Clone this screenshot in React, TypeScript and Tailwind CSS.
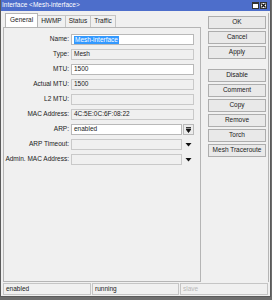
import React from "react";

const Field = ({ value, ro, selected, w = "w-[123px]" }: { value?: string; ro?: boolean; selected?: boolean; w?: string }) => (
  <div
    className={`${w} h-[11px] flex items-center px-[2px] border ${ro ? "bg-[#f0f0f0] border-[#c9c9c9]" : "bg-white border-[#b9b9b9]"}`}
  >
    {value && (
      <span className={selected ? "bg-[#3399ff] text-white leading-[8px] px-[1px]" : "text-[#1a1a1a]"}>{value}</span>
    )}
  </div>
);

const Row = ({ label, children }: { label: string; children: React.ReactNode }) => (
  <div className="flex items-center h-[11px]">
    <div className="w-[67px] text-right pr-[2px] text-[#1a1a1a]">{label}</div>
    {children}
  </div>
);

const Arrow = () => (
  <svg width="7" height="5" viewBox="0 0 7 5" className="ml-[3px]">
    <path d="M0.5 1 L6.5 1 L3.5 4.5 Z" fill="#111" />
  </svg>
);

const Btn = ({ label }: { label: string }) => (
  <div className="h-[13px] flex items-center justify-center border border-[#adadad] bg-[#e9e9e9] text-[#1a1a1a]">{label}</div>
);

export default function App() {
  return (
    <div className="w-[272px] h-[300px] bg-[#6e6e6e] font-['Liberation_Sans',Arial,sans-serif] text-[6.5px] leading-none">
      <div className="w-[271px] h-[297px] flex flex-col bg-[#f0f0f0] border-l border-r border-b border-[#5a5a5a]">
        <div className="h-[11px] bg-[#4d6ecb] flex items-center pl-[1px] pr-[3px] text-white shrink-0">
          <span>Interface &lt;Mesh-interface&gt;</span>
          <div className="ml-auto flex items-center gap-[1px]">
            <div className="w-[7px] h-[7px] bg-white border border-[#333] border-t-2" />
            <div className="w-[7px] h-[7px] bg-white border border-[#333] flex items-center justify-center">
              <svg width="5" height="5" viewBox="0 0 5 5">
                <path d="M0.5 0.5 L4.5 4.5 M4.5 0.5 L0.5 4.5" stroke="#111" strokeWidth="1.3" />
              </svg>
            </div>
          </div>
        </div>
        <div className="flex-1 flex pl-[2px] pt-[2px]">
          <div className="w-[198px] flex flex-col">
            <div className="h-[14px] flex items-end pl-[2px] shrink-0">
              <div className="h-[14px] px-[4px] flex items-center bg-white border border-b-0 border-[#b5b5b5] text-[#1a1a1a]">General</div>
              <div className="h-[12px] px-[3px] flex items-center border border-l-0 border-b-0 border-[#c5c5c5] text-[#1a1a1a]">HWMP</div>
              <div className="h-[12px] px-[3px] flex items-center border border-l-0 border-b-0 border-[#c5c5c5] text-[#1a1a1a]">Status</div>
              <div className="h-[12px] px-[3px] flex items-center border border-l-0 border-b-0 border-[#c5c5c5] text-[#1a1a1a]">Traffic</div>
            </div>
            <div className="flex-1 border border-[#b5b5b5] bg-[#f0f0f0] flex flex-col gap-[4px] pt-[6px]">
              <Row label="Name:"><Field value="Mesh-interface" selected /></Row>
              <Row label="Type:"><Field value="Mesh" ro /></Row>
              <Row label="MTU:"><Field value="1500" /></Row>
              <Row label="Actual MTU:"><Field value="1500" ro /></Row>
              <Row label="L2 MTU:"><Field ro /></Row>
              <Row label="MAC Address:"><Field value="4C:5E:0C:6F:08:22" ro /></Row>
              <Row label="ARP:">
                <Field value="enabled" w="w-[111px]" />
                <div className="ml-[1px] w-[11px] h-[11px] border border-[#b9b9b9] bg-[#ececec] flex items-center justify-center">
                  <svg width="5" height="6" viewBox="0 0 5 6">
                    <path d="M0 0.5 H5 M0 2 L5 2 L2.5 5.5 Z" stroke="#111" strokeWidth="0.8" fill="#111" />
                  </svg>
                </div>
              </Row>
              <Row label="ARP Timeout:">
                <Field ro w="w-[111px]" />
                <Arrow />
              </Row>
              <Row label="Admin. MAC Address:">
                <Field ro w="w-[111px]" />
                <Arrow />
              </Row>
            </div>
          </div>
          <div className="ml-[7px] w-[58px] flex flex-col pt-[3px]">
            <div className="flex flex-col gap-[2px]">
              <Btn label="OK" />
              <Btn label="Cancel" />
              <Btn label="Apply" />
            </div>
            <div className="flex flex-col gap-[2px] mt-[10px]">
              <Btn label="Disable" />
              <Btn label="Comment" />
              <Btn label="Copy" />
              <Btn label="Remove" />
              <Btn label="Torch" />
              <Btn label="Mesh Traceroute" />
            </div>
          </div>
          <div className="ml-[2px] w-px bg-[#b5b5b5]" />
        </div>
        <div className="h-[14px] flex pl-[2px] pr-[2px] pt-[1px] pb-[1px] gap-[1px] shrink-0">
          <div className="w-[88px] flex items-center px-[2px] border border-[#c5c5c5] text-[#1a1a1a]">enabled</div>
          <div className="w-[87px] flex items-center px-[2px] border border-[#c5c5c5] text-[#1a1a1a]">running</div>
          <div className="flex-1 flex items-center px-[2px] border border-[#c5c5c5] text-[#b8b8b8]">slave</div>
        </div>
      </div>
    </div>
  );
}
